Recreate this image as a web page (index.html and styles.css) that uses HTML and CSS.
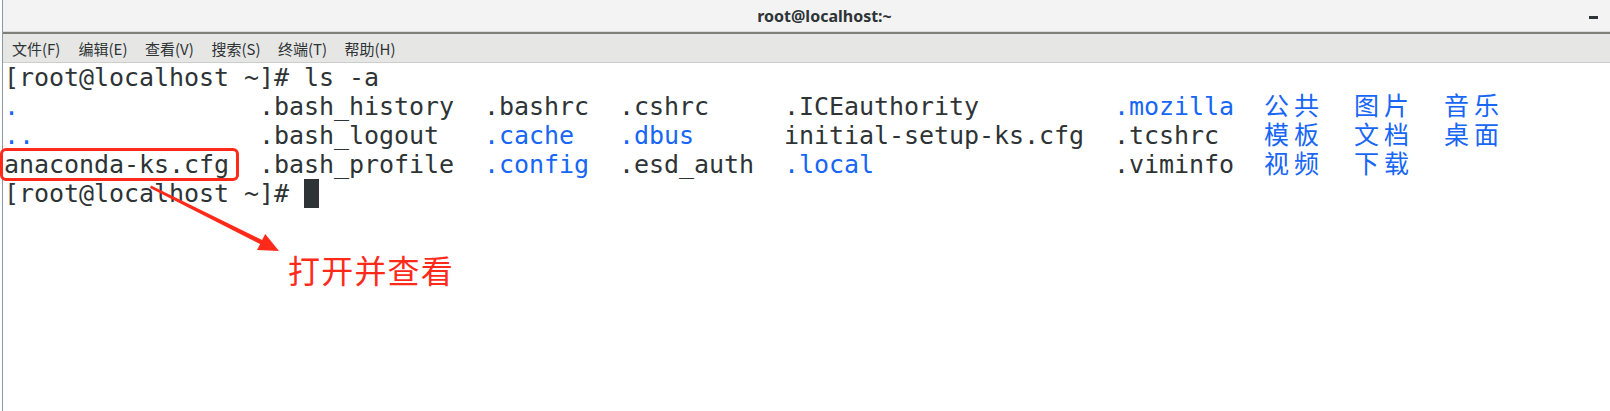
FILE: index.html
```html
<!DOCTYPE html>
<html>

<head>
  <title>root@localhost:~</title>
  <link rel="stylesheet" href="styles.css">
</head>

<body>
  <div class="window">
    <header class="Term-Titlebar">
      <span class="Term-Title">root@localhost:~</span>
      <span class="Term-Min"></span>
    </header>
    <nav class="Term-Menubar">
      <span>文件(F)</span>
      <span>编辑(E)</span>
      <span>查看(V)</span>
      <span>搜索(S)</span>
      <span>终端(T)</span>
      <span>帮助(H)</span>
    </nav>
    <div class="Term-Body">
      <div class="line">[root@localhost ~]# ls -a</div>
      <div class="ls-grid">
        <span class="dir">.</span>
        <span class="dir">..</span>
        <span>anaconda-ks.cfg</span>
        <span>.bash_history</span>
        <span>.bash_logout</span>
        <span>.bash_profile</span>
        <span>.bashrc</span>
        <span class="dir">.cache</span>
        <span class="dir">.config</span>
        <span>.cshrc</span>
        <span class="dir">.dbus</span>
        <span>.esd_auth</span>
        <span>.ICEauthority</span>
        <span>initial-setup-ks.cfg</span>
        <span class="dir">.local</span>
        <span class="dir">.mozilla</span>
        <span>.tcshrc</span>
        <span>.viminfo</span>
        <span class="dir cjk">公共</span>
        <span class="dir cjk">模板</span>
        <span class="dir cjk">视频</span>
        <span class="dir cjk">图片</span>
        <span class="dir cjk">文档</span>
        <span class="dir cjk">下载</span>
        <span class="dir cjk">音乐</span>
        <span class="dir cjk">桌面</span>
      </div>
      <div class="line">[root@localhost ~]# <span class="cursor"></span></div>
    </div>

    <!-- annotation drawn on top of the screenshot -->
    <div class="mark-box"></div>
    <svg class="mark-arrow" width="300" height="270" viewBox="0 0 300 270">
      <polygon points="151,185.5 262.1,240 265.2,234 279,251 257,250 260.1,244 150,188" fill="#ff2a1a" />
    </svg>
    <div class="mark-text">打开并查看</div>
  </div>
</body>

</html>
```

FILE: styles.css
```css
body, html {
  margin: 0;
  padding: 0;
}

body {
  background: #fff;
  width: 1610px;
  height: 411px;
  overflow: hidden;
}

.window {
  height: 411px;
  border-left: 1px solid #8f96a3;
  margin-left: 2px;
  position: relative;
}

.Term-Titlebar {
  height: 31px;
  background: #f3f3f3;
  border-bottom: 1px solid #dadada;
  box-shadow: 0 2px 0 #7e7f79;
  display: flex;
  align-items: center;
  justify-content: center;
  padding-left: 36px;
}

.Term-Title {
  font-family: "Noto Sans", sans-serif;
  font-weight: bold;
  font-size: 16px;
  color: #2e3436;
}

.Term-Min {
  position: absolute;
  right: 12px;
  top: 16px;
  width: 9px;
  height: 3px;
  background: #2e3436;
}

.Term-Menubar {
  margin-top: 2px;
  height: 28px;
  background: #e6e6e4;
  border-bottom: 1px solid #cdcdcd;
  display: flex;
  align-items: center;
  gap: 16px;
  padding-left: 9px;
  font-family: "Noto Sans CJK SC", "Noto Sans", sans-serif;
  font-size: 15px;
  color: #2e3436;
}

.Term-Menubar span {
  width: 50.5px;
  white-space: nowrap;
}

.Term-Body {
  padding: 0 0 0 1px;
  font-family: "DejaVu Sans Mono", "Noto Sans CJK SC", monospace;
  font-size: 25px;
  letter-spacing: -0.05px;
  line-height: 29px;
  color: #2e3436;
}

.line {
  height: 29px;
  white-space: pre;
}

.ls-grid {
  display: grid;
  grid-auto-flow: column;
  grid-template-rows: repeat(3, 29px);
  grid-template-columns: 255px 225px 135px 165px 330px 150px 90px 90px auto;
  white-space: pre;
}

.dir {color: #1766f5;}
.cjk {letter-spacing: 5px;}

.cursor {
  display: inline-block;
  width: 15px;
  height: 29px;
  vertical-align: top;
  background: #2e3436;
}

.mark-box {
  position: absolute;
  left: -3px;
  top: 148px;
  width: 233px;
  height: 27px;
  border: 3px solid #ff2a1a;
  border-radius: 6px;
}

.mark-arrow {
  position: absolute;
  left: -3px;
  top: 0;
}

.mark-text {
  position: absolute;
  left: 285px;
  top: 249px;
  font-family: "Noto Sans CJK SC", sans-serif;
  font-size: 32px;
  line-height: 40px;
  color: #ff2a1a;
  letter-spacing: 1.2px;
}
```
